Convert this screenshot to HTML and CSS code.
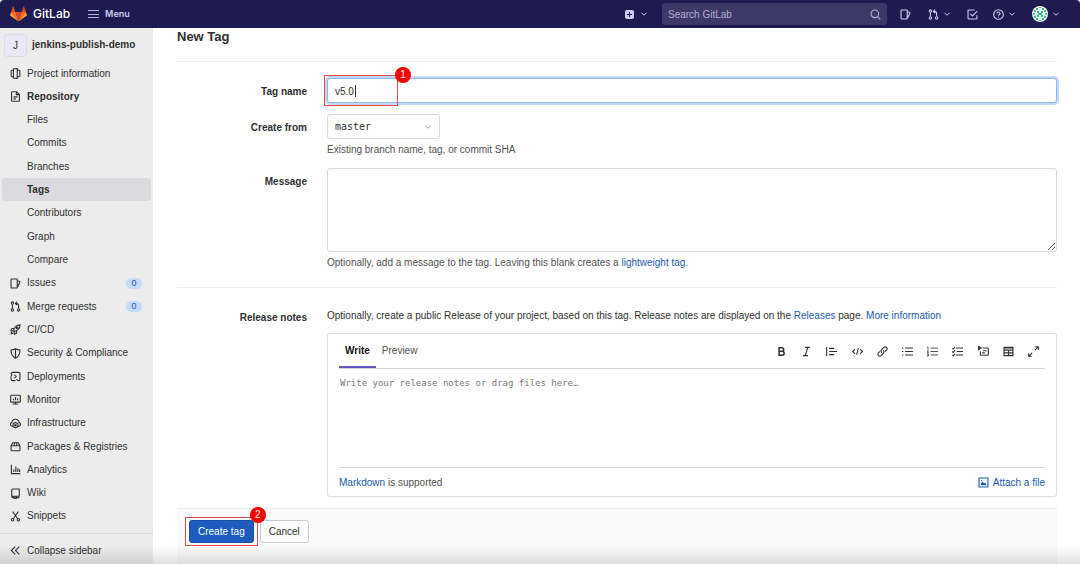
FILE: index.html
```html
<!DOCTYPE html>
<html lang="en">
<head>
<meta charset="utf-8">
<meta name="viewport" content="width=device-width, initial-scale=1">
<title>New Tag · jenkins-publish-demo · GitLab</title>
<link rel="stylesheet" href="styles.css">
</head>
<body>
<svg class="sprite" aria-hidden="true">
  <symbol id="chevron" viewBox="0 0 16 16"><path d="M3 5.5l5 5 5-5"/></symbol>
  <symbol id="project" viewBox="0 0 16 16"><path d="M5 2.500L1.700 4v8L5 13.500M5 1.500l5.500-.8v14.600L5 14.500zM10.500 2.500L14.300 4v8l-3.800 1.500"/></symbol>
  <symbol id="doc" viewBox="0 0 16 16"><path d="M9.500 1H3.500a1.200 1.200 0 0 0-1.200 1.200v11.600A1.200 1.200 0 0 0 3.500 15h9a1.200 1.200 0 0 0 1.200-1.200V5.200zM9.200 1v4.300h4.500M5 8.500h6M5 11.500h3.500"/></symbol>
  <symbol id="issues" viewBox="0 0 16 16"><path d="M2.500 1.500h7a1 1 0 0 1 1 1v11a1 1 0 0 1-1 1h-7a1 1 0 0 1-1-1v-11a1 1 0 0 1 1-1zM10.500 4l3.200.8a1 1 0 0 1 .7 1.300l-3.600 7"/></symbol>
  <symbol id="merge" viewBox="0 0 16 16"><circle cx="3.500" cy="3" r="1.700"/><circle cx="3.500" cy="13" r="1.700"/><circle cx="12.500" cy="13" r="1.700"/><path d="M3.500 5v6M12.500 11V6.500a3 3 0 0 0-3-3H8M10.300 1L7.700 3.500l2.600 2.500"/></symbol>
  <symbol id="rocket" viewBox="0 0 16 16"><path d="M5.500 10.500C5 6 9 1.500 14.700 1.300 14.500 7 10 11 5.500 10.500zM6 6.500H2.800L1.200 9.500l4 .5M9.500 10v3.200l-3 1.600-.5-4M3.500 11c-1.500.6-2 2-2 3.500 1.500 0 2.800-.5 3.300-2"/><circle cx="10.300" cy="5.700" r="1.300"/></symbol>
  <symbol id="shield" viewBox="0 0 16 16"><path d="M8 1.200c2 1.200 4.200 1.600 6.500 1.600 0 5.500-1.500 9.500-6.500 12-5-2.500-6.500-6.500-6.500-12C3.800 2.800 6 2.400 8 1.200zM8 1.500v13"/></symbol>
  <symbol id="deploy" viewBox="0 0 16 16"><path d="M1.500 5V4a2 2 0 0 1 2-2h9a2 2 0 0 1 2 2v8a2 2 0 0 1-2 2h-1M1.500 7.500V12a2 2 0 0 0 2 2H8M6.500 5.500L9 8l-2.500 2.500M3.500 5L1.500 7M11.500 14l-2-2"/></symbol>
  <symbol id="monitor" viewBox="0 0 16 16"><path d="M2 1.800h12a1 1 0 0 1 1 1v8a1 1 0 0 1-1 1H2a1 1 0 0 1-1-1v-8a1 1 0 0 1 1-1zM4 14.500h8M8 12v2.500M5 9V7M8 9V4.500M11 9V6"/></symbol>
  <symbol id="infra" viewBox="0 0 16 16"><path d="M4 12H3.500A2.800 2.800 0 0 1 2.700 6.500 5.300 5.300 0 0 1 13.200 6.500 2.800 2.800 0 0 1 12.500 12H12M8 6.500l3.500 2v4L8 14.500l-3.500-2v-4z"/><circle cx="8" cy="10.500" r="1"/></symbol>
  <symbol id="package" viewBox="0 0 16 16"><path d="M1.500 7L4 2.500h8L14.500 7v6a1.200 1.200 0 0 1-1.200 1.200H2.700A1.200 1.200 0 0 1 1.500 13zM1.500 7h13M6 7l.5-4.500M10 7l-.5-4.500"/></symbol>
  <symbol id="chart" viewBox="0 0 16 16"><path d="M2 1v13h13M5.500 11.500V8M8.500 11.500V3.500M11.500 11.500V6M14 11.500V8"/></symbol>
  <symbol id="book" viewBox="0 0 16 16"><path d="M4 1.500h9.500V12H4a1.500 1.500 0 0 1-1.500-1.500V3A1.500 1.500 0 0 1 4 1.500zM2.500 10.500v1.500A2 2 0 0 0 4.500 14H6M13.500 14H9.500M6 11.500V15.500l1.500-1 1.500 1v-4"/></symbol>
  <symbol id="scissors" viewBox="0 0 16 16"><circle cx="3.800" cy="12.800" r="1.800"/><circle cx="12.200" cy="12.800" r="1.800"/><path d="M4.800 11.200L12 1M11.200 11.200L4 1"/></symbol>
  <symbol id="collapse" viewBox="0 0 16 16"><path d="M7.500 2.500L2 8l5.500 5.500M13.500 2.500L8 8l5.500 5.500"/></symbol>
  <symbol id="search" viewBox="0 0 16 16"><circle cx="7" cy="7" r="5.500"/><path d="M11 11l4 4"/></symbol>
  <symbol id="todo" viewBox="0 0 16 16"><path d="M11 1.500H2.500a1 1 0 0 0-1 1v11a1 1 0 0 0 1 1h11a1 1 0 0 0 1-1V9M5 7l3 3 7-7"/></symbol>
  <symbol id="help" viewBox="0 0 16 16"><circle cx="8" cy="8" r="7"/><path d="M5.800 6.500A2.200 2.200 0 1 1 8 8.700v1M8 11.200v1.300"/></symbol>
  <symbol id="bold" viewBox="0 0 16 16"><path d="M4.500 2.500h4a2.600 2.600 0 0 1 0 5.300h-4zM4.500 7.800H9a2.800 2.800 0 0 1 0 5.700H4.500z" stroke-width="2.200"/></symbol>
  <symbol id="italic" viewBox="0 0 16 16"><path d="M6 2h7M3 14h7M9.800 2L6.200 14"/></symbol>
  <symbol id="quote" viewBox="0 0 16 16"><path d="M1 1.500v13M4.500 3.500H12M4.500 8H16M4.500 12.500H12"/></symbol>
  <symbol id="code" viewBox="0 0 16 16"><path d="M4.300 4.500L.8 8l3.500 3.500M11.700 4.500L15.200 8l-3.500 3.500M9.300 3L6.700 13"/></symbol>
  <symbol id="link" viewBox="0 0 16 16"><path d="M6.800 9.800a3 3 0 0 1-.2-4.200l3.300-3.500a2.800 2.800 0 0 1 4 4L12 8M9.200 6.200a3 3 0 0 1 .2 4.200l-3.300 3.500a2.800 2.800 0 0 1-4-4L4 8"/></symbol>
  <symbol id="bullets" viewBox="0 0 16 16"><path d="M4.500 3H16M4.500 8H16M4.500 13H16M0 3h2M0 8h2M0 13h2"/></symbol>
  <symbol id="numbers" viewBox="0 0 16 16"><path d="M5 3h11M5 8h11M5 13h11M.3 1.500h1.200V5M0 7h2L.5 9.500H2.500M0 11.500h2v3H0M.8 13H2" stroke-width="1.200"/></symbol>
  <symbol id="tasks" viewBox="0 0 16 16"><path d="M6 3h10M7 8h9M6 13h10M.5 3l1.300 1.300L4.500 1.500M.5 8l1.300 1.300L4.500 6.500M.5 13l1.300 1.300 2.700-2.800"/></symbol>
  <symbol id="details" viewBox="0 0 16 16"><path d="M6.500 3H14a1 1 0 0 1 1 1v8.500a1 1 0 0 1-1 1H4.500a1 1 0 0 1-1-1V7.500M7 7h5.500M6 10h4"/><path d="M.5.500L4.500 3 .5 5.500z" fill="currentColor"/></symbol>
  <symbol id="table" viewBox="0 0 16 16"><path d="M1.500 2h13v12h-13zM1.500 6h13M1.500 10h13M8 6v8M2 3h12"/></symbol>
  <symbol id="expand" viewBox="0 0 16 16"><path d="M10 6l5-5M10.500 1H15v4.500M6 10l-5 5M1 10.500V15h4.500"/></symbol>
  <symbol id="image" viewBox="0 0 16 16"><path d="M1.500 1.500h13v13h-13z"/><path d="M4 12V9.500L6.500 7l2.500 2.500L10.500 8.500 12 10v2z" fill="currentColor" stroke="none"/><circle cx="5" cy="5" r="1" fill="currentColor" stroke="none"/></symbol>
</svg>

<header class="navbar">
  <a class="brand" href="#">
    <svg class="logo" viewBox="0 0 36 34" aria-hidden="true">
      <path fill="#e24329" d="M18 33L11.400 13h13.200z"/>
      <path fill="#fc6d26" d="M18 33L11.400 13H2.200zM18 33l6.600-20h9.200z"/>
      <path fill="#fca326" d="M2.200 13L.2 19.200a1.400 1.400 0 0 0 .5 1.500L18 33zM33.800 13l2 6.200a1.400 1.400 0 0 1-.5 1.500L18 33z"/>
      <path fill="#e24329" d="M2.200 13h9.200L7.500.8a.7.7 0 0 0-1.300 0zM33.800 13h-9.200L28.500.8a.7.7 0 0 1 1.300 0z"/>
    </svg>
    <span>GitLab</span>
  </a>
  <button class="menu-button" type="button"><span class="burger"></span>Menu</button>
  <nav class="tools" aria-label="Toolbar">
    <button class="tool new" type="button" aria-label="Create new"><span class="plus"></span><svg class="caret-icon"><use href="#chevron"/></svg></button>
    <div class="search"><input type="search" placeholder="Search GitLab" aria-label="Search GitLab"><svg class="icon"><use href="#search"/></svg></div>
    <a class="tool issues" href="#" aria-label="Issues"><svg class="icon"><use href="#issues"/></svg></a>
    <button class="tool merges" type="button" aria-label="Merge requests"><svg class="icon"><use href="#merge"/></svg><svg class="caret-icon"><use href="#chevron"/></svg></button>
    <a class="tool todos" href="#" aria-label="To-Do List"><svg class="icon"><use href="#todo"/></svg></a>
    <button class="tool help" type="button" aria-label="Help"><svg class="icon"><use href="#help"/></svg><svg class="caret-icon"><use href="#chevron"/></svg></button>
    <button class="tool" type="button" aria-label="Account">
      <svg class="avatar" viewBox="0 0 16 16"><circle cx="8" cy="8" r="8" fill="#f1fbf6"/><path fill="#3cc08a" d="M5 5h2v2H5zM9 5h2v2H9zM5 9h2v2H5zM9 9h2v2H9zM6 7h4v2H6zM7 1h2v1H7zM4 2h2v2H4zM10 2h2v2h-2zM2 4h2v2H2zM12 4h2v2h-2zM1 7h2v2H1zM13 7h2v2h-2zM2 10h2v2H2zM12 10h2v2h-2zM4 12h2v2H4zM10 12h2v2h-2zM7 14h2v1H7z"/></svg>
      <svg class="caret-icon"><use href="#chevron"/></svg>
    </button>
  </nav>
</header>

<div class="layout">
  <aside class="sidebar">
    <a class="project" href="#"><span class="project-avatar">J</span>jenkins-publish-demo</a>
    <nav class="side-nav" aria-label="Project">
      <a href="#"><svg class="icon"><use href="#project"/></svg>Project information</a>
      <a class="current" href="#"><svg class="icon"><use href="#doc"/></svg>Repository</a>
      <a class="sub" href="#">Files</a>
      <a class="sub" href="#">Commits</a>
      <a class="sub" href="#">Branches</a>
      <a class="sub current selected" href="#">Tags</a>
      <a class="sub" href="#">Contributors</a>
      <a class="sub" href="#">Graph</a>
      <a class="sub" href="#">Compare</a>
      <a href="#"><svg class="icon"><use href="#issues"/></svg>Issues<span class="count">0</span></a>
      <a href="#"><svg class="icon"><use href="#merge"/></svg>Merge requests<span class="count">0</span></a>
      <a href="#"><svg class="icon"><use href="#rocket"/></svg>CI/CD</a>
      <a href="#"><svg class="icon"><use href="#shield"/></svg>Security &amp; Compliance</a>
      <a href="#"><svg class="icon"><use href="#deploy"/></svg>Deployments</a>
      <a href="#"><svg class="icon"><use href="#monitor"/></svg>Monitor</a>
      <a href="#"><svg class="icon"><use href="#infra"/></svg>Infrastructure</a>
      <a href="#"><svg class="icon"><use href="#package"/></svg>Packages &amp; Registries</a>
      <a href="#"><svg class="icon"><use href="#chart"/></svg>Analytics</a>
      <a href="#"><svg class="icon"><use href="#book"/></svg>Wiki</a>
      <a href="#"><svg class="icon"><use href="#scissors"/></svg>Snippets</a>
    </nav>
    <button class="collapse" type="button"><svg class="icon"><use href="#collapse"/></svg>Collapse sidebar</button>
  </aside>

  <main class="content">
    <h1>New Tag</h1>
    <form class="tag-form">
      <div class="row">
        <label for="tag-name">Tag name</label>
        <div class="name-field">
          <input id="tag-name" type="text" value="v5.0">
          <span class="text-cursor"></span>
          <span class="callout callout-name"><span class="step">1</span></span>
        </div>
      </div>
      <div class="row">
        <label for="ref">Create from</label>
        <div>
          <div class="select">
            <select id="ref"><option>master</option></select>
            <svg class="caret-icon"><use href="#chevron"/></svg>
          </div>
          <p class="hint">Existing branch name, tag, or commit SHA</p>
        </div>
      </div>
      <div class="row">
        <label for="message">Message</label>
        <div>
          <textarea id="message" class="message"></textarea>
          <p class="hint">Optionally, add a message to the tag. Leaving this blank creates a <a href="#">lightweight tag</a>.</p>
        </div>
      </div>
      <div class="row release">
        <label for="notes">Release notes</label>
        <div>
          <p class="intro">Optionally, create a public Release of your project, based on this tag. Release notes are displayed on the <a href="#">Releases</a> page. <a href="#">More information</a></p>
          <div class="editor">
            <div class="editor-head">
              <button class="tab active" type="button">Write</button>
              <button class="tab" type="button">Preview</button>
              <div class="formatting">
                <button type="button" aria-label="Bold"><svg class="icon"><use href="#bold"/></svg></button>
                <button type="button" aria-label="Italic"><svg class="icon"><use href="#italic"/></svg></button>
                <button type="button" aria-label="Quote"><svg class="icon"><use href="#quote"/></svg></button>
                <button type="button" aria-label="Code"><svg class="icon"><use href="#code"/></svg></button>
                <button type="button" aria-label="Link"><svg class="icon"><use href="#link"/></svg></button>
                <button type="button" aria-label="Bullet list"><svg class="icon"><use href="#bullets"/></svg></button>
                <button type="button" aria-label="Numbered list"><svg class="icon"><use href="#numbers"/></svg></button>
                <button type="button" aria-label="Task list"><svg class="icon"><use href="#tasks"/></svg></button>
                <button type="button" aria-label="Collapsible section"><svg class="icon"><use href="#details"/></svg></button>
                <button type="button" aria-label="Table"><svg class="icon"><use href="#table"/></svg></button>
                <button type="button" aria-label="Full screen"><svg class="icon"><use href="#expand"/></svg></button>
              </div>
            </div>
            <textarea id="notes" class="notes" placeholder="Write your release notes or drag files here…"></textarea>
            <div class="editor-foot">
              <span><a href="#">Markdown</a> is supported</span>
              <button class="attach" type="button"><svg class="icon"><use href="#image"/></svg>Attach a file</button>
            </div>
          </div>
        </div>
      </div>
      <div class="actions">
        <div class="submit-wrap">
          <button class="button primary" type="submit">Create tag</button>
          <span class="callout callout-submit"><span class="step">2</span></span>
        </div>
        <button class="button" type="button">Cancel</button>
      </div>
    </form>
  </main>
</div>
<div class="window-shade"></div>
</body>
</html>
```

FILE: styles.css
```css
* { box-sizing: border-box; }

body {
  margin: 0;
  min-height: 100vh;
  display: flex;
  flex-direction: column;
  background: #fff;
  color: #303030;
  font: 10px/16px "Liberation Sans", Arial, sans-serif;
}

a { color: #1b5aab; text-decoration: none; }
p { margin: 0; }
button { font: inherit; color: inherit; background: none; border: 0; padding: 0; }
input, select, textarea { font: inherit; color: inherit; display: block; width: 100%; outline: 0; }

.sprite { position: absolute; width: 0; height: 0; }
.icon, .caret-icon {
  display: block;
  flex: none;
  width: 11px;
  height: 11px;
  fill: none;
  stroke: currentColor;
  stroke-width: 1.600;
}
.caret-icon { width: 8px; height: 8px; stroke-width: 2; }

/* Top bar */
.navbar {
  display: flex;
  align-items: center;
  height: 28px;
  padding: 0 20px 0 10px;
  background: #1f1b50;
  color: #cfcbef;
  border-radius: 4px 4px 0 0;
}
.brand {
  display: flex;
  align-items: center;
  gap: 6px;
  color: #fff;
  font: 500 12px/16px Inter, "Liberation Sans", sans-serif;
}
.logo { width: 17px; height: 16px; }
.menu-button { display: flex; align-items: center; gap: 6px; margin-left: 18px; font: 600 9px/16px Inter, "Liberation Sans", sans-serif; }
.burger { width: 11px; height: 8px; border: solid #b5b0dc; border-width: 1px 0; background: linear-gradient(#b5b0dc, #b5b0dc) center / 100% 1px no-repeat; }
.tools { display: flex; align-items: center; margin-left: auto; }
.tool { display: flex; align-items: center; gap: 4px; color: #cfcbef; }
.new { gap: 6px; margin-right: 14px; }
.plus {
  width: 9px;
  height: 9px;
  border-radius: 2px;
  background:
    linear-gradient(#1f1b50, #1f1b50) center / 5px 1px no-repeat,
    linear-gradient(#1f1b50, #1f1b50) center / 1px 5px no-repeat,
    #cfcbef;
}
.search {
  display: flex;
  align-items: center;
  width: 225px;
  height: 22px;
  padding: 0 6px;
  border-radius: 3px;
  background: #3d3868;
  color: #b3afd2;
}
.search input { flex: 1; min-width: 0; padding: 2px 0 0; border: 0; background: none; }
.search input::placeholder { color: #b3afd2; opacity: 1; }
.issues { margin-left: 13px; }
.merges { margin-left: 17px; }
.todos { margin-left: 16px; }
.help { margin-left: 15px; }
.help + .tool { margin-left: 16px; }
.avatar { width: 16px; height: 16px; }

/* Sidebar */
.layout { flex: 1; display: flex; }
.sidebar {
  flex: none;
  display: flex;
  flex-direction: column;
  width: 153px;
  background: #ececec;
}
.project {
  display: flex;
  align-items: center;
  gap: 5px;
  height: 33px;
  padding: 1px 4px 0;
  color: #303030;
  font-weight: 600;
}
.project-avatar {
  width: 23px;
  height: 23px;
  border: 1px solid #dcdcec;
  border-radius: 3px;
  background: #e9e9f8;
  font-weight: 400;
  line-height: 21px;
  text-align: center;
}
.side-nav { flex: 1; display: flex; flex-direction: column; justify-content: space-between; padding: 0 2px 6px 2px; }
.side-nav a {
  display: flex;
  align-items: center;
  gap: 6px;
  height: 23px;
  padding: 2px 9px 0 8px;
  border-radius: 3px;
  color: #303030;
}
.side-nav .sub { padding-left: 25px; }
.side-nav .current { font-weight: 600; }
.side-nav .selected { background: #dbdbdf; }
.count {
  width: 16px;
  height: 11px;
  margin-left: auto;
  border-radius: 6px;
  background: #c3dafa;
  color: #1b5aab;
  font-size: 9px;
  line-height: 11px;
  text-align: center;
}
.collapse {
  display: flex;
  align-items: center;
  gap: 6px;
  height: 31px;
  padding: 3px 10px 0;
  border-top: 1px solid #d8d8d8;
}

/* Form */
.content { flex: 1; min-width: 0; display: flex; flex-direction: column; padding: 0 23px 0 24px; }
h1 { margin: 0; padding-bottom: 16px; border-bottom: 1px solid #eee; font-size: 13px; font-weight: 600; line-height: 17px; }
.tag-form { flex: 1; display: flex; flex-direction: column; gap: 11px; padding-top: 16px; }
.row { display: grid; grid-template-columns: 130px minmax(0, 1fr); gap: 20px; }
.row > label { padding-top: 6px; font-weight: 600; text-align: right; }
.name-field { position: relative; }
.name-field input {
  height: 25px;
  padding: 2px 7px 0;
  border: 1px solid #8db8f2;
  border-radius: 3px;
  box-shadow: 0 0 0 2px #c3d9fa;
}
.text-cursor { position: absolute; top: 7px; left: 28px; width: 1px; height: 12px; background: #303030; }
.callout { position: absolute; border: 1px solid #f04848; pointer-events: none; }
.callout-name { top: -3px; left: -3px; width: 74px; height: 31px; }
.callout-submit { inset: -3px -4px; }
.step {
  position: absolute;
  top: -9px;
  right: -14px;
  width: 16px;
  height: 16px;
  border-radius: 50%;
  background: #f60000;
  color: #fff;
  text-align: center;
}
.callout-submit .step { top: -11px; right: -9px; }
.select { position: relative; width: 113px; }
.select select {
  appearance: none;
  height: 25px;
  padding: 0 7px;
  border: 1px solid #dadada;
  border-radius: 3px;
  background: #fff;
  font-family: "DejaVu Sans Mono", monospace;
}
.select .caret-icon { position: absolute; top: 9px; right: 8px; color: #999; }
.hint { padding-top: 4px; color: #525252; line-height: 14px; }
.message {
  height: 84px;
  padding: 4px 7px;
  border: 1px solid #dadada;
  border-radius: 3px;
}
.release { margin-top: 6px; padding-top: 20px; border-top: 1px solid #eee; }
.release > label { padding-top: 2px; }
.editor { margin-top: 9px; padding: 0 11px; border: 1px solid #dedede; border-radius: 3px; }
.editor-head { display: flex; align-items: stretch; height: 35px; border-bottom: 1px solid #d4d4d4; }
.tab { padding: 2px 6px 0; border-bottom: 2px solid transparent; color: #525252; }
.tab.active { border-color: #6056bc; color: #111; font-weight: 600; }
.formatting { display: flex; align-items: center; justify-content: space-between; width: 263px; margin-left: auto; padding-right: 6px; box-sizing: content-box; }
.notes {
  height: 98px;
  padding: 6px 1px;
  border: 0;
  resize: none;
  font-family: "DejaVu Sans Mono", monospace;
  font-size: 9px;
}
.notes::placeholder { color: #777; opacity: 1; }
.editor-foot { display: flex; align-items: center; justify-content: space-between; height: 29px; padding-top: 1px; border-top: 1px solid #d4d4d4; color: #525252; }
.attach { display: flex; align-items: center; gap: 4px; color: #1b5aab; }
.actions {
  flex: 1;
  display: flex;
  align-items: flex-start;
  gap: 6px;
  padding: 11px 12px 20px;
  border-top: 1px solid #ececec;
  background: #fafafa;
}
.submit-wrap { position: relative; }
.button { display: block; height: 23px; padding: 0 8px; border: 1px solid #ccc; border-radius: 3px; background: #fff; }
.button.primary { border-color: #174fa5; background: #1b5cbe; color: #fff; }

/* Soft shading along the window's lower edge */
.window-shade {
  position: fixed;
  inset: auto 0 0 0;
  height: 18px;
  background: linear-gradient(transparent, rgba(0, 0, 0, .12));
  pointer-events: none;
}
```
